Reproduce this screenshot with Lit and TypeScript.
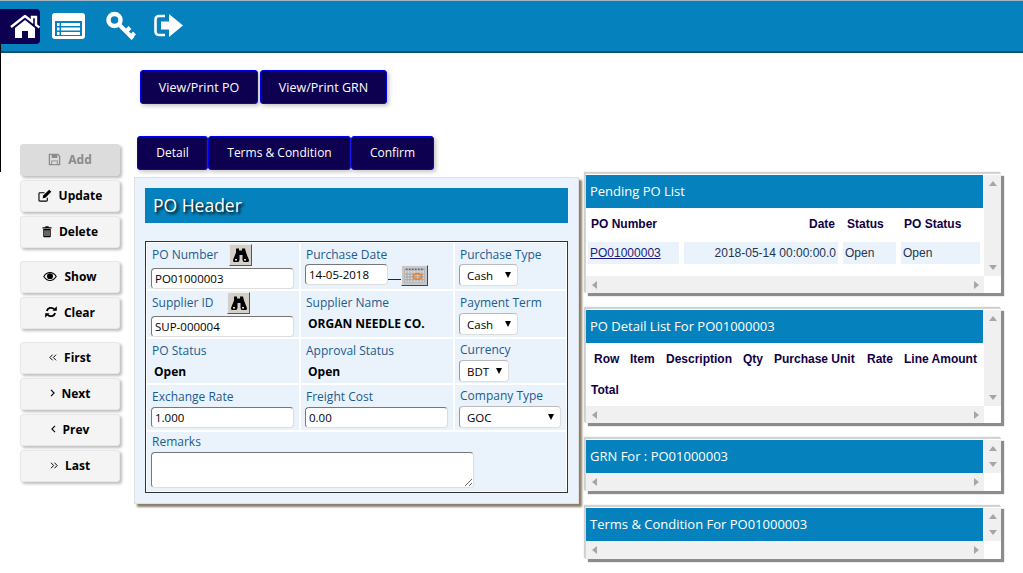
import { css, html, LitElement } from 'lit';
import { customElement } from 'lit/decorators.js';

const icons = {
  home: html`<svg class="nav-home" viewBox="0 0 30 23"><path d="M1 12 15 1l7 5.500V2h4v8l3.500 2.500" fill="none" stroke="#fff" stroke-width="2.400"/><path d="M5 13 15 5l10 8v10h-7v-7h-6v7H5z" fill="#fff"/></svg>`,
  list: html`<svg class="nav-list" viewBox="0 0 33 26"><rect width="33" height="26" rx="3" fill="#fff"/><rect x="3" y="8" width="27" height="15" fill="#0582bd"/><path d="M9 10h19v3H9zM9 14.500h19v3H9zM9 19h19v3H9zM5 10h2.500v3H5zM5 14.500h2.500v3H5zM5 19h2.500v3H5z" fill="#fff"/></svg>`,
  key: html`<svg class="nav-key" viewBox="0 0 30 30"><circle cx="8.500" cy="9" r="6" fill="none" stroke="#fff" stroke-width="4.500"/><path d="m13 13.500 14 14M20 20.500l4-4M25 25.500l3.500-3.500" fill="none" stroke="#fff" stroke-width="4"/></svg>`,
  signOut: html`<svg class="nav-out" viewBox="0 0 29 23"><path d="M11 2H5a3.500 3.500 0 0 0-3.500 3.500v12A3.500 3.500 0 0 0 5 21h6" fill="none" stroke="#fff" stroke-width="2.600"/><path d="M7 7.500h8V0l14 11.500L15 23v-7.500H7z" fill="#fff"/></svg>`,
  save: html`<svg width="13" height="13" viewBox="0 0 14 14"><path d="M1.500 1.500h9l2 2v9h-11z" fill="none" stroke="currentColor" stroke-width="1.400"/><path d="M4 2h6v3.500H4zM3.500 8h7v4h-7z" fill="currentColor"/><path d="M4.500 9h5v3h-5z" fill="#ddd"/></svg>`,
  edit: html`<svg width="14" height="13" viewBox="0 0 15 14"><path d="M10 9.500V12a1 1 0 0 1-1 1H2a1 1 0 0 1-1-1V5a1 1 0 0 1 1-1h5" fill="none" stroke="currentColor" stroke-width="1.200"/><path d="m5 10 .5-3L12 .8l2.300 2.200L8 9.500z" fill="currentColor"/></svg>`,
  trash: html`<svg width="10" height="13" viewBox="0 0 12 14"><path d="M4 2V.7h4V2h3.500v1.400H.5V2zM1.500 4h9v9a1 1 0 0 1-1 1h-7a1 1 0 0 1-1-1z" fill="currentColor"/><path d="M3.600 5.500v7M6 5.500v7M8.400 5.500v7" stroke="#f4f4f4"/></svg>`,
  eye: html`<svg width="14" height="9" viewBox="0 0 15 10"><path d="M.6 5C2.500 2 5 .6 7.500.6S12.500 2 14.400 5c-1.900 3-4.400 4.400-6.900 4.400S2.500 8 .6 5z" fill="none" stroke="currentColor" stroke-width="1.200"/><circle cx="7.500" cy="4.600" r="3.300" fill="currentColor"/></svg>`,
  refresh: html`<svg width="12" height="12" viewBox="0 0 13 13"><path d="M2 5.500a4.700 4.700 0 0 1 8-2" fill="none" stroke="currentColor" stroke-width="2"/><path d="M8 5.200h4.800V.4z" fill="currentColor"/><path d="M11 7.500a4.700 4.700 0 0 1-8 2" fill="none" stroke="currentColor" stroke-width="2"/><path d="M5 7.800H.2v4.800z" fill="currentColor"/></svg>`,
  first: html`<svg width="8" height="7" viewBox="0 0 9 8"><path d="M4 .8.900 4 4 7.200M8 .8 4.900 4 8 7.200" fill="none" stroke="currentColor" stroke-width="1.100"/></svg>`,
  last: html`<svg width="8" height="7" viewBox="0 0 9 8"><path d="M1 .8 4.100 4 1 7.200M5 .8 8.100 4 5 7.200" fill="none" stroke="currentColor" stroke-width="1.100"/></svg>`,
  next: html`<svg width="5" height="8" viewBox="0 0 5 8"><path d="M1 .8 4.100 4 1 7.200" fill="none" stroke="currentColor" stroke-width="1.100"/></svg>`,
  prev: html`<svg width="5" height="8" viewBox="0 0 5 8"><path d="M4 .8.900 4 4 7.200" fill="none" stroke="currentColor" stroke-width="1.100"/></svg>`,
  binoculars: html`<svg viewBox="0 0 17 14"><path d="M4 .5h3v2h3v-2h3l1 4 3 7.500-.5 2h-5l-1-2V7H7.500v5l-1 2h-5L1 12l3-7.500z" fill="#000"/><path d="M3 11h2v1.500H3zM12 11h2v1.500h-2z" fill="#ddd"/></svg>`,
  calendar: html`<svg viewBox="0 0 21 16" preserveAspectRatio="none"><rect width="21" height="16" fill="#b5b5b5"/><rect x="1" y="3" width="19" height="12" fill="#d8d8d8"/><path d="M3 3.500v11M6 3.500v11M9 3.500v11M12 3.500v11M15 3.500v11M18 3.500v11M1 6.500h19M1 9.500h19M1 12.500h19" stroke="#8f8f8f" stroke-width=".7"/><path d="M2 1.500h17" stroke="#4a4fb0" stroke-dasharray="1.500 1.500" stroke-width="1.500"/><ellipse cx="13.500" cy="9" rx="4" ry="3" fill="none" stroke="#e8812c" stroke-width="1.800"/></svg>`,
};

const sideGroups = [
  [
    { label: 'Add', icon: icons.save, disabled: true },
    { label: 'Update', icon: icons.edit },
    { label: 'Delete', icon: icons.trash },
  ],
  [
    { label: 'Show', icon: icons.eye },
    { label: 'Clear', icon: icons.refresh },
  ],
  [
    { label: 'First', icon: icons.first },
    { label: 'Next', icon: icons.next },
    { label: 'Prev', icon: icons.prev },
    { label: 'Last', icon: icons.last },
  ],
];

@customElement('app-root')
export class AppRoot extends LitElement {
  static styles = css`
    :host {
      display: block;
      font-family: 'Open Sans', 'Liberation Sans', sans-serif;
      font-size: 12px;
      color: #000;
    }

    * {
      box-sizing: border-box;
    }

    .nav {
      display: flex;
      height: 53px;
      background: #0582bd;
      border-top: 1px solid #9fb4bf;
      border-bottom: 2px solid #004f7d;
    }

    .nav__home {
      display: flex;
      align-items: center;
      justify-content: center;
      width: 40px;
      height: 35px;
      margin-top: 8px;
      padding-left: 9px;
      background: #0d0050;
      border-radius: 0 4px 4px 0;
    }

    .nav__item {
      display: flex;
      align-items: center;
      height: 50px;
    }

    .nav-home { width: 30px; height: 23px; flex: none; }
    .nav-list { width: 33px; height: 26px; display: block; margin: -1px 0 0 12px; }
    .nav-key { width: 30px; height: 30px; display: block; margin: -1px 0 0 21px; }
    .nav-out { width: 29px; height: 23px; display: block; margin: -2px 0 0 18px; }

    .page {
      display: flex;
      align-items: flex-start;
      min-height: 520px;
    }

    .edge {
      width: 1px;
      height: 128px;
      margin-top: -9px;
      background: #000;
      position: relative;
    }

    .side {
      display: flex;
      flex-direction: column;
      gap: 13px;
      width: 100px;
      margin: 91px 0 0 19px;
    }

    .side__group {
      display: flex;
      flex-direction: column;
      gap: 4px;
    }

    .side__btn {
      display: flex;
      align-items: center;
      justify-content: center;
      gap: 7px;
      height: 32px;
      padding-bottom: 2px;
      background: #f4f4f4;
      border: 1px solid #e8e8e8;
      border-radius: 3px;
      box-shadow: 2px 2px 3px #bdbdbd;
      font-weight: 700;
      font-size: 12px;
      color: #000;
    }

    .side__btn svg {
      display: block;
      flex: none;
    }

    .side__btn--off {
      background: #dcdcdc;
      border-color: #dcdcdc;
      color: #8a8a8a;
    }

    .center {
      width: 445px;
      margin-left: 14px;
      padding-top: 17px;
    }

    .dark-btn {
      display: flex;
      align-items: center;
      justify-content: center;
      height: 34px;
      padding-bottom: 2px;
      background: #0d0050;
      border: 1px solid #0000ee;
      border-radius: 3px;
      box-shadow: 2px 2px 4px #c4c4c4;
      color: #fff;
      font-size: 12px;
      font-weight: 500;
    }

    .actions {
      display: flex;
      gap: 2px;
      margin-left: 6px;
    }

    .actions .dark-btn {
      padding-bottom: 0;
      font-size: 12.500px;
    }

    .actions .dark-btn:nth-child(1) { width: 118px; }
    .actions .dark-btn:nth-child(2) { width: 127px; }

    .tabs {
      display: flex;
      margin: 32px 0 7px 3px;
    }

    .tabs .dark-btn:nth-child(1) { width: 71px; }
    .tabs .dark-btn:nth-child(2) { width: 143px; }
    .tabs .dark-btn:nth-child(3) { width: 83px; }

    .sheet {
      height: 327px;
      padding: 10px;
      background: #eaf3fb;
      border: 1px solid #dfdfdf;
      box-shadow: 3px 3px 2px #8a7f6c;
    }

    .sheet__title {
      height: 35px;
      padding-left: 8px;
      background: #0582bd;
      color: #fff;
      font-size: 17.500px;
      line-height: 35px;
      text-shadow: 2px 2px 3px #000;
    }

    .form {
      display: grid;
      grid-template-columns: 152px 152px 1fr;
      grid-template-rows: 46px 46px 44px 45px 59px;
      gap: 2px;
      margin-top: 18px;
      padding: 1px;
      background: #fff;
      border: 1px solid #333;
    }

    .cell {
      display: flex;
      flex-direction: column;
      align-items: flex-start;
      padding-left: 4px;
      background: #eaf3fb;
    }

    .pt0 { padding-top: 0; }
    .pt1 { padding-top: 1px; }
    .pt2 { padding-top: 2px; }

    .cell--wide {
      grid-column: 1 / -1;
    }

    .label {
      height: 20px;
      margin-left: 1px;
      line-height: 20px;
      color: #1d5b8f;
      font-size: 12px;
      white-space: nowrap;
    }

    .label--tight {
      height: 19px;
    }

    .label-row {
      display: flex;
      align-items: center;
      height: 22px;
      margin-bottom: 2px;
    }

    .find {
      display: flex;
      align-items: center;
      justify-content: center;
      width: 23px;
      height: 22px;
      padding: 0;
      background: #d4d0c8;
      border: 1px solid;
      border-color: #eee #555 #555 #eee;
    }

    .find svg {
      width: 17px;
      height: 14px;
      display: block;
    }

    .find--po { margin-left: 11px; }
    .find--supplier { margin-left: 13px; }

    .field {
      height: 21px;
      width: 143px;
      padding: 0 3px;
      background: #fff;
      border: 1px solid;
      border-color: #777 #ddd #ddd #777;
      border-radius: 4px;
      font: 11.500px 'Open Sans', sans-serif;
      color: #000;
      outline: none;
    }

    .field--date {
      width: 83px;
    }

    .field--remarks {
      display: block;
      width: 323px;
      height: 36px;
      resize: both;
    }

    .date-row {
      display: flex;
      align-items: flex-start;
    }

    .date-link {
      width: 13px;
      height: 16px;
      border-bottom: 1px solid #1a1a7a;
    }

    .date-btn {
      display: flex;
      width: 27px;
      height: 21px;
      margin-top: 1px;
      padding: 2px;
      background: #c8c8c8;
      border: 1px solid;
      border-color: #eee #444 #444 #eee;
    }

    .date-btn svg {
      width: 100%;
      height: 100%;
      display: block;
    }

    .value {
      height: 20px;
      margin: 1px 0 0 3px;
      line-height: 20px;
      font-size: 12px;
      font-weight: 700;
      white-space: nowrap;
    }

    .picker {
      position: relative;
      height: 22px;
    }

    .picker::after {
      content: '';
      position: absolute;
      top: 8px;
      right: 7px;
      border: 3.500px solid transparent;
      border-top: 6px solid #000;
      border-bottom: 0;
    }

    .picker select {
      appearance: none;
      width: 100%;
      height: 100%;
      padding: 0 7px;
      background: #fff;
      border: 1px solid;
      border-color: #bbb #ddd #ddd #999;
      border-radius: 4px;
      font: 11.500px 'Open Sans', sans-serif;
      color: #000;
      outline: none;
    }

    .picker--cash { width: 59px; }
    .picker--bdt { width: 50px; }
    .picker--company { width: 102px; }

    .right {
      display: flex;
      flex-direction: column;
      gap: 15px;
      width: 416px;
      margin: 120px 0 0 6px;
    }

    .panel {
      display: grid;
      grid-template-columns: 398px 17px;
      grid-template-rows: auto 17px;
      padding-top: 1px;
      background: #fff;
      border: 1px solid #d5d5d5;
      border-bottom: 0;
      border-right: 0;
      box-shadow: 3px 3px 1px #8c8c8c, -1px -1px 1px #cfcfcf;
    }

    .panel--empty {
      grid-template-rows: auto 18px;
    }

    .panel__body {
      min-width: 0;
    }

    .panel__title {
      height: 33px;
      margin-right: 1px;
      padding-left: 4px;
      background: #0582bd;
      color: #fff;
      font-size: 13px;
      line-height: 33px;
      white-space: nowrap;
    }

    .vbar,
    .hbar,
    .corner {
      display: flex;
      justify-content: space-between;
      align-items: center;
      background: #f0f0f0;
    }

    .vbar {
      flex-direction: column;
      padding: 6px 0;
    }

    .hbar {
      padding: 0 5px 0 6px;
    }

    .corner {
      background: #fff;
    }

    .arrow {
      width: 0;
      height: 0;
      border: 4px solid transparent;
    }

    .arrow--up { border-top: 0; border-bottom: 5px solid #a6a6a6; }
    .arrow--down { border-bottom: 0; border-top: 5px solid #a6a6a6; }
    .arrow--left { border-left: 0; border-right: 5px solid #a6a6a6; }
    .arrow--right { border-right: 0; border-left: 5px solid #a6a6a6; }

    .table {
      font-family: 'Liberation Sans', Arial, sans-serif;
      font-size: 12px;
      color: #1c3552;
    }

    .table b {
      color: #100045;
      white-space: nowrap;
    }

    .pending {
      display: grid;
      grid-template-columns: 91px 154px 53px 79px;
      grid-template-rows: 34px 22px;
      column-gap: 5px;
      align-items: center;
      height: 68px;
      padding-left: 2px;
    }

    .pending > span {
      display: flex;
      align-items: center;
      height: 22px;
      padding: 0 2px;
      background: #eaf3fb;
      white-space: nowrap;
    }

    .pending a {
      color: #1a1a7a;
      text-decoration: underline;
    }

    .pending .cell-date {
      justify-content: flex-end;
    }

    .pending b {
      padding: 0 0 2px 3px;
    }

    .pending b.head-status {
      padding-left: 4px;
    }

    .pending .head-date {
      text-align: right;
      padding-right: 3px;
    }

    .details {
      height: 63px;
    }

    .details__head {
      display: grid;
      grid-template-columns: 36px 36px 77px 31px 93px 37px auto;
      align-items: center;
      height: 31px;
      padding-left: 8px;
    }

    .details__total {
      padding: 9px 0 0 5px;
    }
  `;

  private renderSideButton(btn: { label: string; icon: unknown; disabled?: boolean }) {
    return html`
      <div class="side__btn ${btn.disabled ? 'side__btn--off' : ''}">${btn.icon}<span>${btn.label}</span></div>
    `;
  }

  private renderPanel(title: string, body: unknown = null) {
    return html`
      <section class="panel ${body ? '' : 'panel--empty'}">
        <div class="panel__body">
          <div class="panel__title">${title}</div>
          ${body}
        </div>
        <div class="vbar"><i class="arrow arrow--up"></i><i class="arrow arrow--down"></i></div>
        <div class="hbar"><i class="arrow arrow--left"></i><i class="arrow arrow--right"></i></div>
        <div class="corner"></div>
      </section>
    `;
  }

  private renderPicker(size: string, value: string) {
    return html`
      <div class="picker picker--${size}">
        <select><option>${value}</option></select>
      </div>
    `;
  }

  protected render() {
    const pending = html`
      <div class="table pending">
        <b>PO Number</b>
        <b class="head-date">Date</b>
        <b class="head-status">Status</b>
        <b>PO Status</b>
        <span><a href="#">PO01000003</a></span>
        <span class="cell-date">2018-05-14 00:00:00.0</span>
        <span>Open</span>
        <span>Open</span>
      </div>
    `;
    const details = html`
      <div class="table details">
        <div class="details__head">
          <b>Row</b><b>Item</b><b>Description</b><b>Qty</b><b>Purchase Unit</b><b>Rate</b><b>Line Amount</b>
        </div>
        <div class="details__total"><b>Total</b></div>
      </div>
    `;

    return html`
      <header class="nav">
        <div class="nav__home">${icons.home}</div>
        <div class="nav__item">${icons.list}${icons.key}${icons.signOut}</div>
      </header>

      <main class="page">
        <div class="edge"></div>

        <nav class="side">
          ${sideGroups.map(
            (group) => html`<div class="side__group">${group.map((btn) => this.renderSideButton(btn))}</div>`
          )}
        </nav>

        <div class="center">
          <div class="actions">
            <div class="dark-btn">View/Print PO</div>
            <div class="dark-btn">View/Print GRN</div>
          </div>
          <div class="tabs">
            <div class="dark-btn">Detail</div>
            <div class="dark-btn">Terms &amp; Condition</div>
            <div class="dark-btn">Confirm</div>
          </div>

          <section class="sheet">
            <div class="sheet__title">PO Header</div>
            <div class="form">
              <div class="cell pt1">
                <div class="label-row">
                  <span class="label">PO Number</span>
                  <button class="find find--po">${icons.binoculars}</button>
                </div>
                <input class="field" .value=${'PO01000003'} />
              </div>
              <div class="cell pt2">
                <span class="label label--tight">Purchase Date</span>
                <div class="date-row">
                  <input class="field field--date" .value=${'14-05-2018'} />
                  <span class="date-link"></span>
                  <button class="date-btn">${icons.calendar}</button>
                </div>
              </div>
              <div class="cell pt2">
                <span class="label label--tight">Purchase Type</span>
                ${this.renderPicker('cash', 'Cash')}
              </div>

              <div class="cell pt1">
                <div class="label-row">
                  <span class="label">Supplier ID</span>
                  <button class="find find--supplier">${icons.binoculars}</button>
                </div>
                <input class="field" .value=${'SUP-000004'} />
              </div>
              <div class="cell pt2">
                <span class="label">Supplier Name</span>
                <span class="value">ORGAN NEEDLE CO.</span>
              </div>
              <div class="cell pt2">
                <span class="label">Payment Term</span>
                ${this.renderPicker('cash', 'Cash')}
              </div>

              <div class="cell pt2">
                <span class="label">PO Status</span>
                <span class="value">Open</span>
              </div>
              <div class="cell pt2">
                <span class="label">Approval Status</span>
                <span class="value">Open</span>
              </div>
              <div class="cell pt1">
                <span class="label">Currency</span>
                ${this.renderPicker('bdt', 'BDT')}
              </div>

              <div class="cell pt2">
                <span class="label">Exchange Rate</span>
                <input class="field" .value=${'1.000'} />
              </div>
              <div class="cell pt2">
                <span class="label">Freight Cost</span>
                <input class="field" .value=${'0.00'} />
              </div>
              <div class="cell pt1">
                <span class="label">Company Type</span>
                ${this.renderPicker('company', 'GOC')}
              </div>

              <div class="cell cell--wide pt0">
                <span class="label">Remarks</span>
                <textarea class="field field--remarks"></textarea>
              </div>
            </div>
          </section>
        </div>

        <aside class="right">
          ${this.renderPanel('Pending PO List', pending)}
          ${this.renderPanel('PO Detail List For PO01000003', details)}
          ${this.renderPanel('GRN For : PO01000003')}
          ${this.renderPanel('Terms & Condition For PO01000003')}
        </aside>
      </main>
    `;
  }
}
